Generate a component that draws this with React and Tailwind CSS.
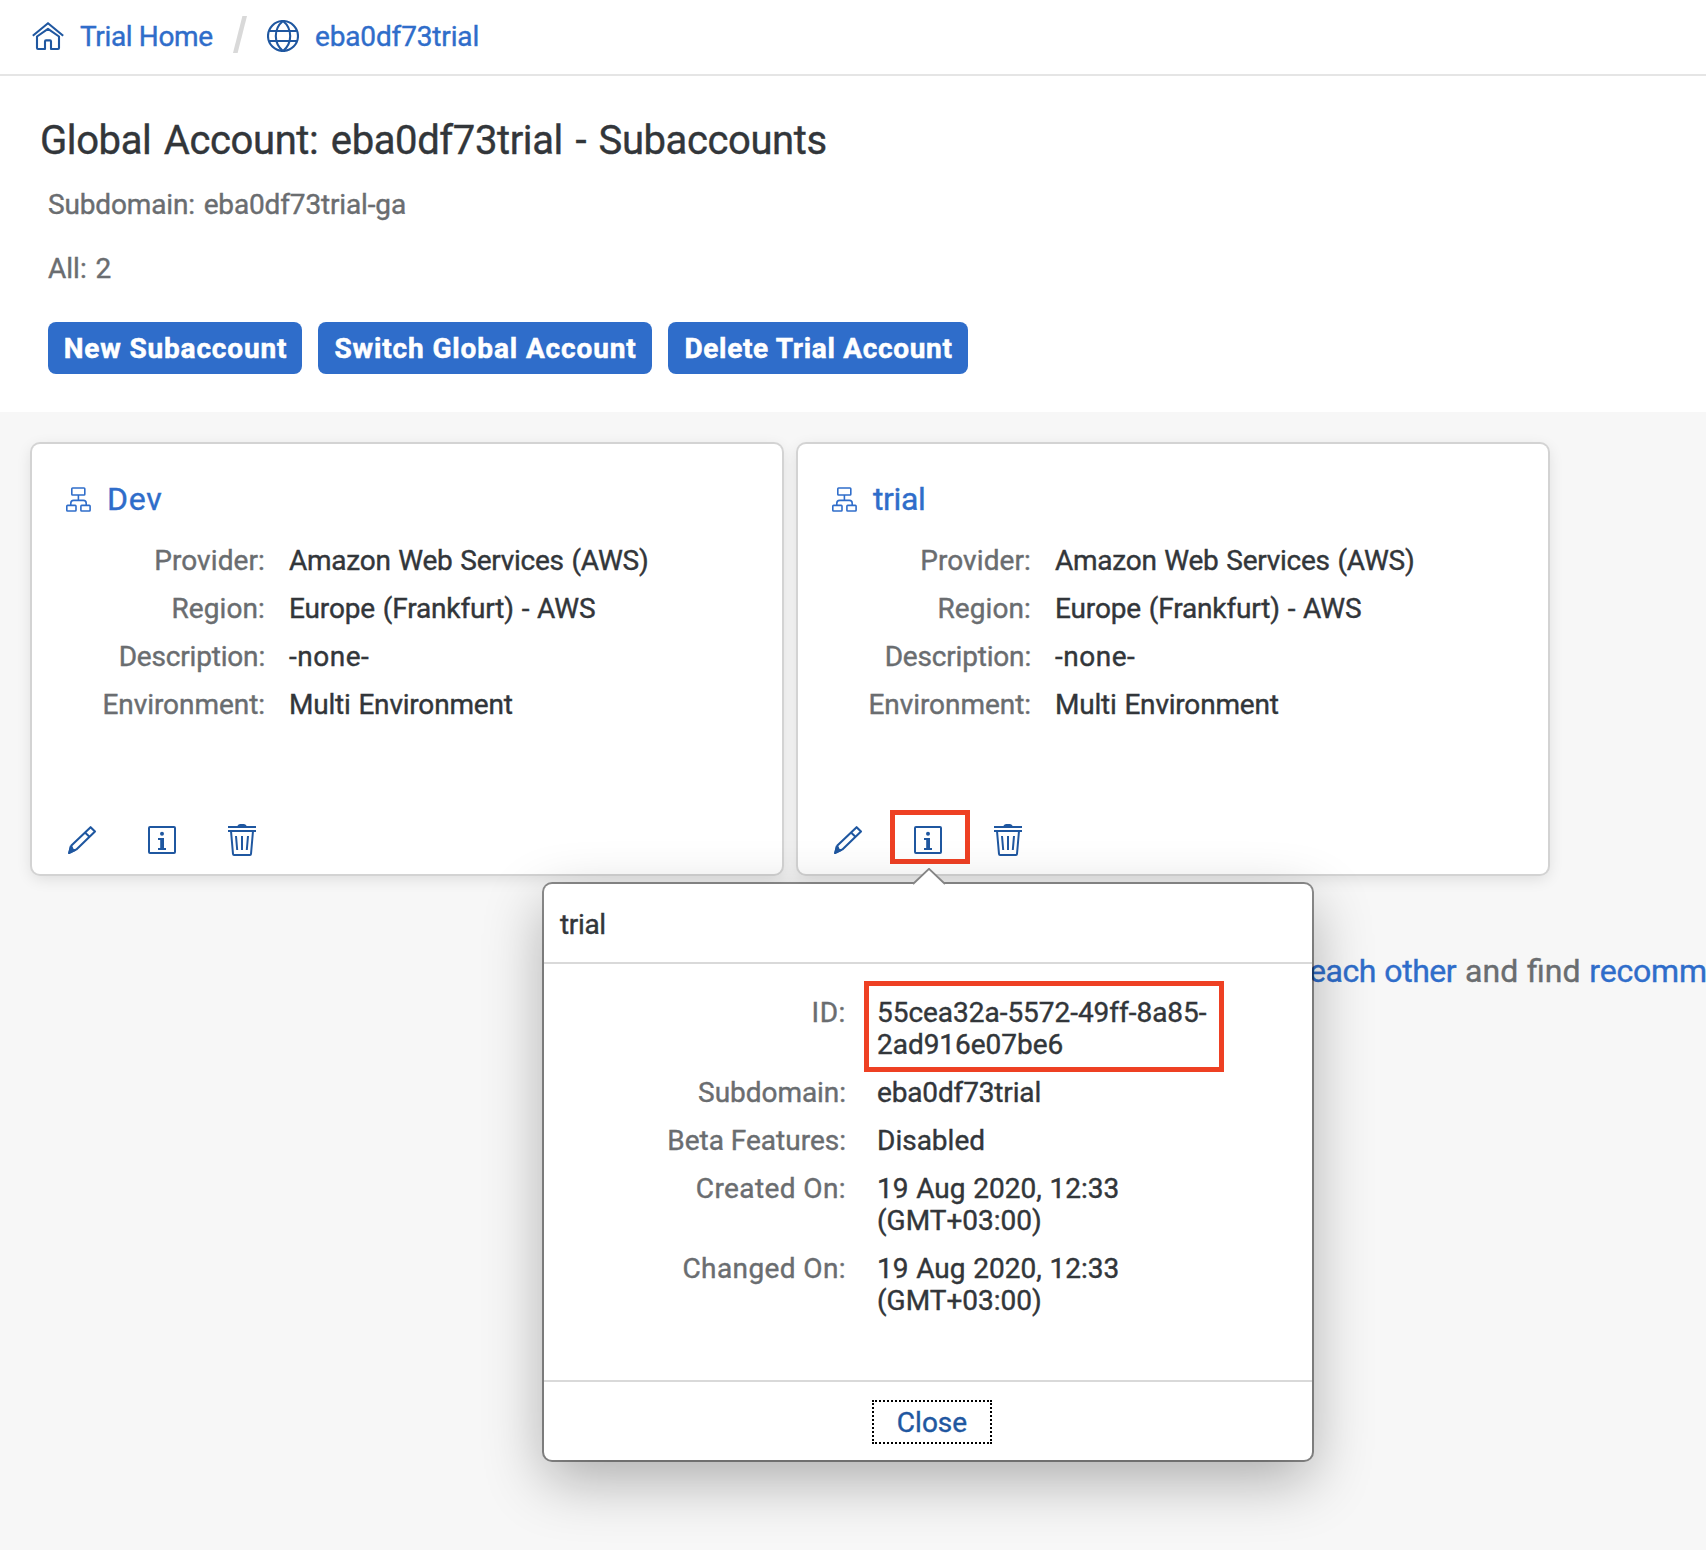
import React from "react";

const HomeIcon = () => (
  <svg className="h-8 w-8 shrink-0" viewBox="0 0 32 32" fill="none" stroke="#1f57a0" strokeWidth="2.100" strokeLinejoin="round">
    <path d="M.8 15.800 16 3.200l15.200 12.600" />
    <path d="M5 16.500V28a1 1 0 0 0 1 1h7v-7.600a1 1 0 0 1 1-1h4a1 1 0 0 1 1 1V29h7a1 1 0 0 0 1-1V16.500L16 8.800Z" />
  </svg>
);

const GlobeIcon = () => (
  <svg className="h-8 w-8 shrink-0" viewBox="0 0 32 32" fill="none" stroke="#1f57a0" strokeWidth="2.100">
    <circle cx="16" cy="16" r="15" />
    <path d="M2.200 11h27.600M2.200 21h27.600M16 1C11 5 8.800 10 8.800 16S11 27 16 31M16 1c5 4 7.200 9 7.200 15S21 27 16 31" />
  </svg>
);

const TreeIcon = () => (
  <svg className="h-[25px] w-[25px] shrink-0" viewBox="0 0 25 25" fill="none" stroke="#2f6dca" strokeWidth="1.600" strokeLinejoin="round">
    <rect x="5.800" y="1" width="13" height="7" rx=".8" />
    <rect x=".8" y="18.400" width="9.200" height="5.600" rx=".8" />
    <rect x="14.900" y="18.400" width="9.200" height="5.600" rx=".8" />
    <path d="M12.400 8v5.400M4.800 18.400v-2.200q0-2.800 2.800-2.800h9.800q2.800 0 2.800 2.800v2.200" />
  </svg>
);

const PencilIcon = () => (
  <svg className="h-8 w-8" viewBox="0 0 32 32" fill="none" stroke="#1f57a0" strokeWidth="2.100" strokeLinejoin="round">
    <path d="M24.600 3.200 29 7.600 10.400 25.400 3.200 29 5.400 21.600Z" />
    <path d="m19 8.600 4.700 4.300" />
    <path d="M2 30 3.800 21.800l2.800.6.800 2.400 2.400.6.300 1.400Z" fill="#1f57a0" stroke="none" />
  </svg>
);

const InfoIcon = () => (
  <svg className="h-8 w-8" viewBox="0 0 32 32" fill="none">
    <rect x="3" y="3" width="26" height="26" rx="1" stroke="#1f57a0" strokeWidth="2" />
    <circle cx="16" cy="9.800" r="2" fill="#1f57a0" />
    <path d="M12 14h6v10h2v2h-8v-2h2.200v-8H12Z" fill="#1f57a0" />
  </svg>
);

const TrashIcon = () => (
  <svg className="h-8 w-8" viewBox="0 0 32 32" fill="none" stroke="#1f57a0">
    <path d="M2 3h28M2 7h28" strokeWidth="2" />
    <path d="M11 2.500Q12 0 14 0h4q2 0 3 2.500Z" fill="#1f57a0" stroke="none" />
    <path d="M5 7l2 23q.1 1 1 1h16q.9 0 1-1L27 7" strokeWidth="2" />
    <path d="M10 12l1.200 14M16 12v14M22 12l-1.200 14" strokeWidth="2" />
  </svg>
);

function Property({ label, value, labelClass, valueClass, labelWidth, gap }) {
  return (
    <div className="flex py-2">
      <div className={`shrink-0 text-right text-[#6a6d70] ${labelWidth} ${labelClass || ""}`}>{label}</div>
      <div className={`${gap} whitespace-pre-line ${valueClass || ""}`}>{value}</div>
    </div>
  );
}

const CARD_ROWS = [
  { label: "Provider:", labelClass: "tracking-[0.1px]", value: "Amazon Web Services (AWS)", valueClass: "tracking-[-0.25px] [word-spacing:1px]" },
  { label: "Region:", labelClass: "tracking-[0.1px]", value: "Europe (Frankfurt) - AWS", valueClass: "tracking-[-0.15px] [word-spacing:1px]" },
  { label: "Description:", labelClass: "tracking-[-0.18px]", value: "-none-", valueClass: "tracking-[0.5px]" },
  { label: "Environment:", labelClass: "tracking-[-0.05px]", value: "Multi Environment", valueClass: "tracking-[-0.2px] [word-spacing:1px]" },
];

const DETAILS = [
  { label: "Subdomain:", labelClass: "tracking-[-0.05px]", value: "eba0df73trial", valueClass: "tracking-[-0.15px]" },
  { label: "Beta Features:", value: "Disabled" },
  { label: "Created On:", labelClass: "tracking-[0.4px]", value: "19 Aug 2020, 12:33\n(GMT+03:00)", valueClass: "[word-spacing:0.800px]" },
  { label: "Changed On:", labelClass: "tracking-[0.4px]", value: "19 Aug 2020, 12:33\n(GMT+03:00)", valueClass: "[word-spacing:0.800px]" },
];

function DetailsPopover() {
  return (
    <div className="absolute top-[71px] -left-[344px] z-10 flex h-[576px] w-[768px] flex-col rounded-lg bg-white shadow-[0_0_0_2px_rgba(0,0,0,0.42),0_20px_60px_0_rgba(0,0,0,0.3)]">
      <svg className="absolute -top-4 left-[368px] h-[17px] w-[34px]" viewBox="0 0 34 17">
        <path d="M1 16 17 0l16 16v1H1Z" fill="#fff" />
        <path d="M1 16 17 .8l16 15.200" fill="none" stroke="#858585" strokeWidth="1.800" />
      </svg>
      <div className="flex h-20 shrink-0 items-center border-b-2 border-[#d9d9d9] pt-1 pl-4 tracking-[-0.35px]">trial</div>
      <div className="grow pt-[25px]">
        <div className="relative">
          <Property label="ID:" labelClass="tracking-[0.6px]" value={"55cea32a-5572-49ff-8a85-\n2ad916e07be6"} valueClass="tracking-[-0.03px]" labelWidth="w-[302px]" gap="ml-[31px]" />
          <div className="absolute -top-2 left-80 h-[91px] w-[360px] border-[5px] border-[#ee4023]" />
        </div>
        {DETAILS.map((d) => (
          <Property key={d.label} {...d} labelWidth="w-[302px]" gap="ml-[31px]" />
        ))}
      </div>
      <div className="flex h-20 shrink-0 items-center justify-center border-t-2 border-[#d9d9d9] pt-[2px] pl-2">
        <button className="flex h-11 w-[120px] items-center justify-center border-2 border-dotted border-black pt-[2px] text-[#1f57a0]">Close</button>
      </div>
    </div>
  );
}

function Card({ name, nameClass, open }) {
  return (
    <section className="flex h-[430px] w-[750px] shrink-0 flex-col rounded-lg bg-white pt-[35px] shadow-[0_0_0_2px_#d3d3d3,0_4px_16px_0_rgba(0,0,0,0.12)]">
      <h2 className="flex h-10 items-center gap-4 pl-[34px] text-[32px] leading-10 text-[#2f6dca]">
        <TreeIcon />
        <span className={nameClass}>{name}</span>
      </h2>
      <div className="pt-[18px]">
        {CARD_ROWS.map((r) => (
          <Property key={r.label} {...r} labelWidth="w-[233px]" gap="ml-6" />
        ))}
      </div>
      <div className="mt-auto mb-[7px] flex h-[54px] pl-[10px]">
        <div className="flex w-20 items-center justify-center"><PencilIcon /></div>
        <div className="relative flex w-20 items-center justify-center">
          <InfoIcon />
          {open && <div className="absolute -top-[3px] left-[2px] h-[54px] w-20 border-[5px] border-[#ee4023]" />}
          {open && <DetailsPopover />}
        </div>
        <div className="flex w-20 items-center justify-center"><TrashIcon /></div>
      </div>
    </section>
  );
}

export default function App() {
  return (
    <div className="flex h-[1550px] w-[1706px] flex-col overflow-hidden bg-[#f7f7f7] font-['Roboto','Noto_Sans',sans-serif] text-[28px] leading-8 text-[#32363a] [-webkit-text-stroke:0.4px]">
      <nav className="flex h-[76px] shrink-0 items-center border-b-2 border-[#e5e5e5] bg-white pb-[2px] pl-8 text-[#2f6dca]">
        <HomeIcon />
        <span className="ml-4 w-[137px] pt-[2px] tracking-[-0.35px] whitespace-nowrap">Trial Home</span>
        <svg className="mb-1 ml-4 h-[37px] w-[14px]" viewBox="0 0 14 37">
          <path d="M9.400 0H14L4.600 37H0Z" fill="#d9d9d9" />
        </svg>
        <span className="ml-5"><GlobeIcon /></span>
        <span className="ml-4 pt-[2px] tracking-[-0.15px]">eba0df73trial</span>
      </nav>
      <header className="h-[336px] shrink-0 bg-white pt-[41px]">
        <h1 className="pl-10 text-[40px] leading-[48px] tracking-[-0.4px] [word-spacing:3px]">Global Account: eba0df73trial - Subaccounts</h1>
        <div className="pl-12 text-[#6a6d70]">
          <p className="mt-6 tracking-[-0.15px] [word-spacing:2px]">Subdomain: eba0df73trial-ga</p>
          <p className="mt-8 [word-spacing:2px]">All: 2</p>
        </div>
        <div className="mt-[37px] flex gap-4 pl-12 font-bold text-white [-webkit-text-stroke:0.5px]">
          <button className="h-[52px] w-[254px] rounded-lg bg-[#2f6dca] pt-[2px] pl-px tracking-[0.83px]">New Subaccount</button>
          <button className="h-[52px] w-[334px] rounded-lg bg-[#2f6dca] pt-[2px] pl-px tracking-[0.87px]">Switch Global Account</button>
          <button className="h-[52px] w-[300px] rounded-lg bg-[#2f6dca] pt-[2px] pl-px tracking-[0.67px]">Delete Trial Account</button>
        </div>
      </header>
      <main className="pt-8">
        <div className="relative z-10 flex gap-4 pl-8">
          <Card name="Dev" nameClass="tracking-[0.8px]" />
          <Card name="trial" nameClass="tracking-[-0.4px]" open />
        </div>
        <p className="mt-[77px] pl-[1309px] text-[32px] leading-10 whitespace-nowrap text-[#6a6d70] [word-spacing:0.900px]">
          <span className="tracking-[-0.45px] text-[#2f6dca]">each other</span> and find{" "}
          <span className="tracking-[-0.2px] text-[#2f6dca]">recommendations</span>
        </p>
      </main>
    </div>
  );
}
